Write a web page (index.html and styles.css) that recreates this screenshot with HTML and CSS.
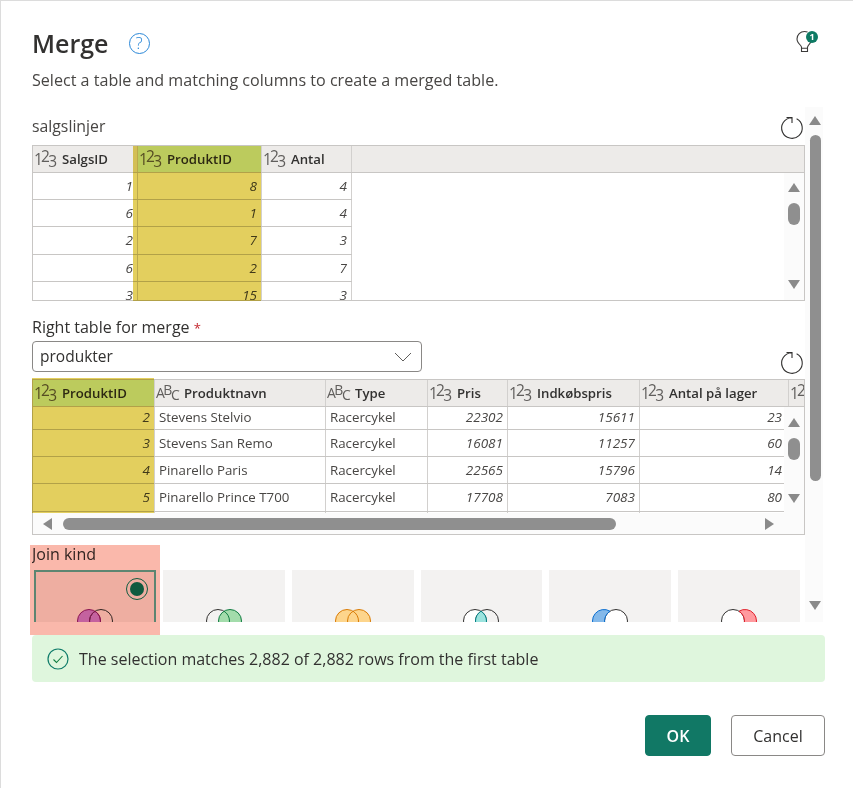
FILE: index.html
```html
<!DOCTYPE html>
<html lang="en">
<head>
<meta charset="utf-8">
<title>Merge</title>
<link rel="stylesheet" href="styles.css">
</head>
<body>
<main class="dialog">
  <header class="title-row">
    <h1 class="title">Merge</h1>
    <span class="help">?</span>
    <span class="bulb">
      <svg width="22" height="24" viewBox="0 0 22 24"><path d="M5.500 18C5 16.500 3 15 2 13.200 1.300 12 1 11 1 10 1 5.800 4.400 2.500 8.500 2.500c1.100 0 2.100.2 3 .6M15.900 11c-.3 2.500-3.400 4.200-4.400 7M5.500 18v4.500h6V18M5.500 19.300h6" fill="none" stroke="#3b3a39" stroke-width="1.100"/></svg>
      <span class="bulb-badge">1</span>
    </span>
  </header>
  <p class="subtitle">Select a table and matching columns to create a merged table.</p>

  <div class="scroll-area">
    <div class="content">
      <div class="label-row">
        <span class="label">salgslinjer</span>
        <svg class="refresh" width="26" height="26" viewBox="0 0 26 26"><path d="M17.600 3.800A10.300 10.300 0 1 1 12.500 2.700M7.500 2.500H13V8" fill="none" stroke="#323130" stroke-width="1.100"/></svg>
      </div>

      <div class="table table-one">
        <div class="rows">
          <div class="row head">
            <div class="cell"><span class="type">1<sup>2</sup><sub>3</sub></span>SalgsID</div>
            <div class="cell picked"><span class="type">1<sup>2</sup><sub>3</sub></span>ProduktID</div>
            <div class="cell"><span class="type">1<sup>2</sup><sub>3</sub></span>Antal</div>
            <div class="cell blank"></div>
          </div>
          <div class="row"><div class="cell num">1</div><div class="cell num">8</div><div class="cell num">4</div></div>
          <div class="row"><div class="cell num">6</div><div class="cell num">1</div><div class="cell num">4</div></div>
          <div class="row"><div class="cell num">2</div><div class="cell num">7</div><div class="cell num">3</div></div>
          <div class="row"><div class="cell num">6</div><div class="cell num">2</div><div class="cell num">7</div></div>
          <div class="row"><div class="cell num">3</div><div class="cell num">15</div><div class="cell num">3</div></div>
        </div>
        <div class="vbar vbar-one">
          <span class="arrow up"></span>
          <span class="vthumb"></span>
          <span class="arrow down"></span>
        </div>
        <div class="mark mark-one"></div>
      </div>

      <div class="field-label">Right table for merge <span class="req">*</span></div>
      <div class="select-row">
        <div class="select">
          <span class="select-value">produkter</span>
          <svg width="18" height="10" viewBox="0 0 18 10"><path d="M1 1l8 8 8-8" fill="none" stroke="#605e5c" stroke-width="1"/></svg>
        </div>
        <svg class="refresh refresh-low" width="26" height="26" viewBox="0 0 26 26"><path d="M17.600 3.800A10.300 10.300 0 1 1 12.500 2.700M7.500 2.500H13V8" fill="none" stroke="#323130" stroke-width="1.100"/></svg>
      </div>

      <div class="table table-two">
        <div class="rows">
          <div class="row head">
            <div class="cell picked"><span class="type">1<sup>2</sup><sub>3</sub></span>ProduktID</div>
            <div class="cell"><span class="type abc">A<sup>B</sup><sub>C</sub></span>Produktnavn</div>
            <div class="cell"><span class="type abc">A<sup>B</sup><sub>C</sub></span>Type</div>
            <div class="cell"><span class="type">1<sup>2</sup><sub>3</sub></span>Pris</div>
            <div class="cell"><span class="type">1<sup>2</sup><sub>3</sub></span>Indkøbspris</div>
            <div class="cell"><span class="type">1<sup>2</sup><sub>3</sub></span>Antal på lager</div>
            <div class="cell"><span class="type">1<sup>2</sup><sub>3</sub></span></div>
          </div>
          <div class="row short"><div class="cell num">2</div><div class="cell txt">Stevens Stelvio</div><div class="cell txt">Racercykel</div><div class="cell num">22302</div><div class="cell num">15611</div><div class="cell num">23</div></div>
          <div class="row"><div class="cell num">3</div><div class="cell txt">Stevens San Remo</div><div class="cell txt">Racercykel</div><div class="cell num">16081</div><div class="cell num">11257</div><div class="cell num">60</div></div>
          <div class="row"><div class="cell num">4</div><div class="cell txt">Pinarello Paris</div><div class="cell txt">Racercykel</div><div class="cell num">22565</div><div class="cell num">15796</div><div class="cell num">14</div></div>
          <div class="row"><div class="cell num">5</div><div class="cell txt">Pinarello Prince T700</div><div class="cell txt">Racercykel</div><div class="cell num">17708</div><div class="cell num">7083</div><div class="cell num">80</div></div>
          <div class="row stub"><div class="cell"></div><div class="cell"></div><div class="cell"></div><div class="cell"></div><div class="cell"></div><div class="cell"></div></div>
        </div>
        <div class="hbar">
          <span class="arrow left"></span>
          <span class="hthumb"></span>
          <span class="arrow right"></span>
        </div>
        <div class="vbar vbar-two">
          <span class="arrow up"></span>
          <span class="vthumb"></span>
          <span class="arrow down"></span>
        </div>
        <div class="mark mark-two"></div>
      </div>

      <div class="join-label">Join kind</div>
      <div class="cards">
        <div class="card chosen">
          <span class="radio"><span class="radio-dot"></span></span>
          <svg class="venn" width="36" height="24" viewBox="0 0 36 24"><circle cx="12" cy="12" r="11.500" fill="#c887ed" stroke="#8e1c76"/><circle cx="24" cy="12" r="11.500" fill="none" stroke="#323130"/><path d="M18 2.190A11.500 11.500 0 0 1 18 21.810 11.500 11.500 0 0 1 18 2.190Z" fill="none" stroke="#8e1c76"/></svg>
        </div>
        <div class="card">
          <svg class="venn" width="36" height="24" viewBox="0 0 36 24"><circle cx="12" cy="12" r="11.500" fill="none" stroke="#323130"/><circle cx="24" cy="12" r="11.500" fill="#a3dcab" stroke="#107c41"/><path d="M18 2.190A11.500 11.500 0 0 1 18 21.810" fill="none" stroke="#107c41"/></svg>
        </div>
        <div class="card">
          <svg class="venn" width="36" height="24" viewBox="0 0 36 24"><circle cx="12" cy="12" r="11.500" fill="#fdd58c" stroke="#d97b05"/><circle cx="24" cy="12" r="11.500" fill="#fdd58c" stroke="#d97b05"/><path d="M18 2.190A11.500 11.500 0 0 1 18 21.810" fill="none" stroke="#d97b05"/></svg>
        </div>
        <div class="card">
          <svg class="venn" width="36" height="24" viewBox="0 0 36 24"><circle cx="12" cy="12" r="11.500" fill="#fff" stroke="#323130"/><circle cx="24" cy="12" r="11.500" fill="none" stroke="#323130"/><path d="M18 2.190A11.500 11.500 0 0 1 18 21.810 11.500 11.500 0 0 1 18 2.190Z" fill="#9be3de" stroke="#038387"/></svg>
        </div>
        <div class="card">
          <svg class="venn" width="36" height="24" viewBox="0 0 36 24"><circle cx="24" cy="12" r="11.500" fill="#fff" stroke="#323130"/><path d="M18 2.190A11.500 11.500 0 1 0 18 21.810 11.500 11.500 0 0 1 18 2.190Z" fill="#84b9ea" stroke="#0b6fd0"/></svg>
        </div>
        <div class="card">
          <svg class="venn" width="36" height="24" viewBox="0 0 36 24"><circle cx="12" cy="12" r="11.500" fill="#fff" stroke="#323130"/><path d="M18 2.190A11.500 11.500 0 1 1 18 21.810 11.500 11.500 0 0 0 18 2.190Z" fill="#ff9a9f" stroke="#e0202a"/></svg>
        </div>
      </div>
    </div>

    <aside class="outer-bar">
      <span class="arrow up"></span>
      <span class="outer-thumb"></span>
      <span class="arrow down"></span>
    </aside>
  </div>

  <div class="banner">
    <svg width="22" height="22" viewBox="0 0 22 22"><circle cx="11" cy="11" r="10" fill="none" stroke="#107c6a" stroke-width="1.200"/><path d="M6.500 11.500l3 3 6-6.500" fill="none" stroke="#107c41" stroke-width="1.100"/></svg>
    <span>The selection matches 2,882 of 2,882 rows from the first table</span>
  </div>

  <footer class="actions">
    <button class="btn primary">OK</button>
    <button class="btn">Cancel</button>
  </footer>

  <div class="join-mark"></div>
</main>
</body>
</html>
```

FILE: styles.css
```css
* { box-sizing: border-box; }

html, body {
  margin: 0;
  padding: 0;
  background: #fff;
}

body {
  font-family: "Open Sans", "Liberation Sans", sans-serif;
  color: #323130;
}

.dialog {
  position: relative;
  width: 853px;
  height: 788px;
  overflow: hidden;
  padding: 27px 28px 0 31px;
  border-top: 1px solid #dcdcdc;
  border-left: 1px solid #dcdcdc;
  background: #fff;
}

.title-row {
  display: flex;
  align-items: center;
  height: 30px;
}

.title {
  margin: 0;
  font-size: 25px;
  line-height: 30px;
  font-weight: 600;
  color: #323130;
}

.help {
  width: 21px;
  height: 21px;
  margin-left: 20px;
  border: 1.200px solid #2b88d8;
  border-radius: 50%;
  color: #2b88d8;
  font-size: 17px;
  font-weight: 300;
  line-height: 18px;
  text-align: center;
}

.bulb {
  position: relative;
  align-self: flex-start;
  width: 22px;
  height: 24px;
  margin-top: 1px;
  margin-left: auto;
  margin-right: 7px;
}

.bulb-badge {
  position: absolute;
  top: 2px;
  right: 0;
  width: 12px;
  height: 12px;
  border-radius: 50%;
  background: #0e7a64;
  color: #fff;
  font-size: 9px;
  font-weight: 700;
  line-height: 12px;
  text-align: center;
}

.subtitle {
  margin: 11px 0 0;
  font-size: 16.100px;
  line-height: 22px;
  color: #484644;
}

.scroll-area {
  display: flex;
  height: 515px;
  margin-top: 16px;
  overflow: hidden;
}

.content {
  width: 773px;
}

.label-row {
  display: flex;
  align-items: flex-end;
  justify-content: space-between;
  height: 38px;
}

.label {
  font-size: 15.800px;
  line-height: 20px;
  margin-bottom: 9px;
  color: #484644;
}

.refresh {
  margin-bottom: 4px;
}

.table {
  position: relative;
  width: 773px;
  height: 156px;
  border: 1px solid #c8c6c4;
}

.rows {
  height: 100%;
  overflow: hidden;
}

.row {
  display: grid;
  height: 27.200px;
  border-bottom: 1px solid #c8c6c4;
  overflow: hidden;
}

.table-one .row {
  grid-template-columns: 105px 124px 90px 1fr;
  width: 319px;
}

.table-one .head {
  width: auto;
}

.table-two .row {
  grid-template-columns: 122px 171px 102px 80px 132px 149px 120px;
  width: 751px;
}

.table-two .head {
  width: 771px;
}

.table-two .num:nth-child(6) {
  padding-right: 6px;
}

.row.head {
  height: 27px;
  background: #edebe9;
}

.row.short {
  height: 23px;
}

.short .cell {
  padding-bottom: 3px;
}

.table-two .stub {
  height: 3px;
  border-bottom: 0;
}

.cell {
  display: flex;
  align-items: center;
  min-width: 0;
  white-space: nowrap;
  font-size: 13px;
  border-right: 1px solid #d2d0ce;
}

.head .cell {
  padding-left: 1px;
  font-size: 13.200px;
  font-weight: 600;
  color: #323130;
}

.head .picked {
  background: #d3fafc;
}

.blank {
  border-right: 0;
}

.num {
  justify-content: flex-end;
  padding-right: 4px;
  font-style: italic;
  font-size: 13.500px;
  color: #484644;
}

.txt {
  padding-left: 4px;
  font-size: 13.300px;
  color: #484644;
}

.type {
  display: inline-block;
  flex: none;
  width: 28px;
  font-size: 15.500px;
  font-weight: 400;
  line-height: 20px;
  letter-spacing: -1.800px;
  color: #605e5c;
}

.type.abc {
  font-size: 14px;
  letter-spacing: -1.500px;
}

.type sup,
.type sub {
  position: relative;
  font-size: inherit;
  line-height: 0;
  vertical-align: baseline;
}

.type sup { top: -3px; }
.type sub { top: 2px; }

.mark {
  position: absolute;
  background: rgb(227, 207, 94);
  mix-blend-mode: multiply;
  pointer-events: none;
}

.mark-one {
  top: 0;
  left: 100px;
  width: 128px;
  height: 155px;
}

.mark-two {
  top: -2px;
  left: -3px;
  width: 124px;
  height: 135px;
}

.vbar {
  position: absolute;
  right: 0;
  display: flex;
  flex-direction: column;
  align-items: center;
  width: 20px;
  background: #fbfbfb;
}

.vbar-one {
  top: 27px;
  height: 127px;
  padding-top: 10px;
}

.vbar-two {
  top: 27px;
  height: 107px;
  padding-top: 11px;
}

.vthumb {
  width: 12px;
  height: 22px;
  margin-top: 11px;
  border-radius: 6px;
  background: #8f8f8f;
}

.vbar-one .down { margin-top: 55px; }
.vbar-two .down { margin-top: 34px; }

.hbar {
  position: absolute;
  left: 0;
  right: 0;
  bottom: 0;
  display: flex;
  align-items: center;
  height: 21px;
  padding-left: 10px;
  background: #fbfbfb;
}

.hthumb {
  width: 553px;
  height: 12px;
  margin-left: 11px;
  border-radius: 6px;
  background: #8f8f8f;
}

.arrow {
  display: block;
  width: 0;
  height: 0;
  flex: none;
  border-style: solid;
  border-color: transparent;
}

.arrow.up {
  border-width: 0 6px 9px;
  border-bottom-color: #8a8a8a;
}

.arrow.down {
  border-width: 9px 6px 0;
  border-top-color: #8a8a8a;
}

.arrow.left {
  border-width: 6px 9px 6px 0;
  border-right-color: #8a8a8a;
}

.arrow.right {
  margin-left: 149px;
  border-width: 6px 0 6px 9px;
  border-left-color: #8a8a8a;
}

.field-label {
  height: 20px;
  margin-top: 16px;
  font-size: 16px;
  line-height: 20px;
  font-weight: 500;
  color: #323130;
}

.req {
  color: #c4262e;
  font-size: 13px;
  line-height: 0;
}

.select-row {
  display: flex;
  justify-content: space-between;
  margin-top: 4px;
  height: 31px;
}

.select {
  display: flex;
  align-items: center;
  justify-content: space-between;
  width: 390px;
  height: 31px;
  padding: 0 9px 0 7px;
  border: 1px solid #8a8886;
  border-radius: 4px;
  font-size: 15.500px;
  color: #323130;
}

.select-value {
  padding-bottom: 2px;
}

.refresh-low {
  margin-top: 9px;
  margin-bottom: 0;
}

.table-two {
  margin-top: 7px;
}

.join-label {
  margin-top: 9px;
  font-size: 16px;
  line-height: 20px;
  font-weight: 500;
}

.cards {
  display: grid;
  grid-template-columns: repeat(6, 1fr);
  gap: 7px;
  width: 766px;
  margin-top: 6px;
  margin-left: 2px;
}

.card {
  position: relative;
  display: flex;
  justify-content: center;
  align-items: flex-start;
  height: 100px;
  padding-top: 39px;
  background: #f3f2f1;
}

.chosen {
  border: 2px solid #5fb8a8;
  padding-top: 37px;
}

.radio {
  position: absolute;
  top: 6px;
  right: 6px;
  display: flex;
  align-items: center;
  justify-content: center;
  width: 22px;
  height: 22px;
  border: 1px solid #107c5e;
  border-radius: 50%;
}

.radio-dot {
  width: 14px;
  height: 14px;
  border-radius: 50%;
  background: #107c5e;
}

.outer-bar {
  display: flex;
  flex-direction: column;
  align-items: center;
  width: 18px;
  padding-top: 9px;
  padding-left: 2px;
  background: #fbfbfb;
}

.outer-thumb {
  width: 11px;
  height: 346px;
  margin-top: 10px;
  border-radius: 6px;
  background: #8f8f8f;
}

.outer-bar .down {
  margin-top: 120px;
}

.banner {
  display: flex;
  align-items: center;
  gap: 10px;
  height: 47px;
  margin-top: 13px;
  padding-left: 15px;
  border-radius: 4px;
  background: #dff6dd;
  font-size: 16px;
  color: #323130;
}

.actions {
  display: flex;
  justify-content: flex-end;
  gap: 20px;
  margin-top: 33px;
}

.btn {
  width: 94px;
  height: 41px;
  border: 1px solid #8a8886;
  border-radius: 4px;
  background: #fff;
  font-family: inherit;
  font-size: 16px;
  color: #323130;
}

.primary {
  width: 66px;
  border-color: #117865;
  background: #117865;
  color: #fff;
  font-weight: 600;
}

.join-mark {
  position: absolute;
  top: 544px;
  left: 29px;
  width: 130px;
  height: 90px;
  background: rgb(250, 184, 171);
  mix-blend-mode: multiply;
}
```
